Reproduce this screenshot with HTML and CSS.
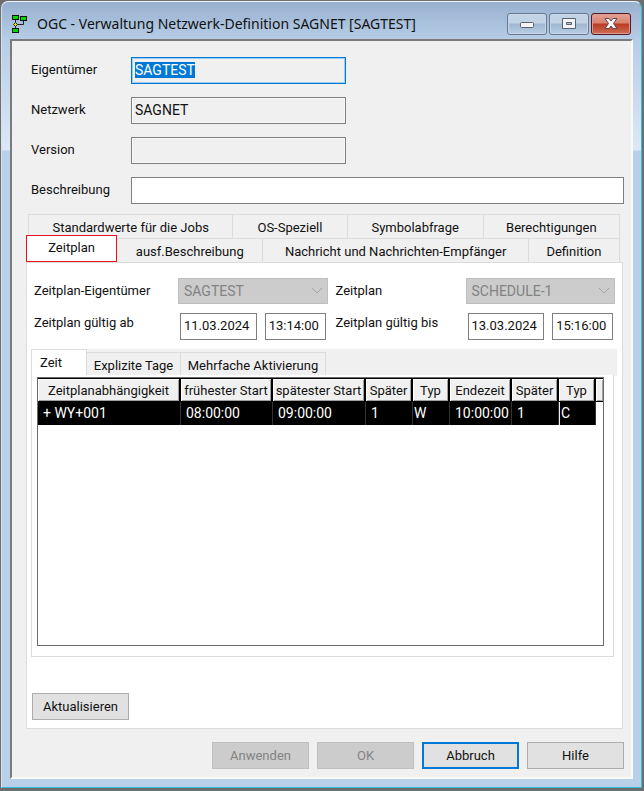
FILE: index.html
```html
<!DOCTYPE html>
<html lang="de">
<head>
    <meta charset="UTF-8">
    <meta name="viewport" content="width=device-width, initial-scale=1.0">
    <title>OGC - Verwaltung Netzwerk-Definition</title>
    <link rel="stylesheet" href="styles.css">
</head>
<body>
    <div class="window">
        <header class="titlebar">
            <svg class="app-icon" width="16" height="20" viewBox="0 0 16 20">
                <path d="M3.500 4v12M4 10.500h7.500V5" fill="none" stroke="#222"/>
                <rect x="0.500" y="1.500" width="6" height="4" fill="#00d800" stroke="#111"/>
                <rect x="8.500" y="2.500" width="6" height="4" fill="#00d800" stroke="#111"/>
                <rect x="0.500" y="14.500" width="6" height="4" fill="#00d800" stroke="#111"/>
                <path d="M3.500 8.500l2 2-2 2-2-2z" fill="#f0e000" stroke="#222"/>
            </svg>
            <h1>OGC - Verwaltung Netzwerk-Definition SAGNET [SAGTEST]</h1>
            <div class="caption-buttons">
                <button type="button" aria-label="Minimieren">
                    <svg width="14" height="12" viewBox="0 0 14 12"><rect x="0.500" y="4.500" width="13" height="5" rx="1" fill="#f4f4f4" stroke="#58616f"/></svg>
                </button>
                <button type="button" aria-label="Maximieren">
                    <svg width="14" height="12" viewBox="0 0 14 12"><path fill-rule="evenodd" d="M0.500 0.500h13v10H0.500zM4.500 4.500v2h5v-2z" fill="#f4f4f4" stroke="#58616f"/></svg>
                </button>
                <button type="button" class="close" aria-label="Schließen">
                    <svg width="14" height="12" viewBox="0 0 14 12"><path d="M1 0.500h4l2 2.500 2-2.500h4L9.500 5.500l3.500 5H9L7 8l-2 2.500H1l3.500-5z" fill="#f4f4f4" stroke="#5d4a52"/></svg>
                </button>
            </div>
        </header>

        <form class="client">
            <div class="fields">
                <label for="owner">Eigentümer</label>
                <input id="owner" class="short focused" type="text" value="SAGTEST" readonly>
                <label for="network">Netzwerk</label>
                <input id="network" class="short" type="text" value="SAGNET" readonly>
                <label for="version">Version</label>
                <input id="version" class="short" type="text" readonly>
                <label for="description">Beschreibung</label>
                <input id="description" type="text">
            </div>

            <div class="tabs" role="tablist">
                <div class="tab-row back">
                    <button type="button" role="tab">Standardwerte für die Jobs</button>
                    <button type="button" role="tab">OS-Speziell</button>
                    <button type="button" role="tab">Symbolabfrage</button>
                    <button type="button" role="tab">Berechtigungen</button>
                </div>
                <div class="tab-row front">
                    <button type="button" role="tab" class="active" aria-selected="true">Zeitplan</button>
                    <button type="button" role="tab">ausf.Beschreibung</button>
                    <button type="button" role="tab">Nachricht und Nachrichten-Empfänger</button>
                    <button type="button" role="tab">Definition</button>
                </div>
            </div>

            <div class="panel">
                <div class="schedule">
                    <label for="sched-owner">Zeitplan-Eigentümer</label>
                    <div class="combo">
                        <select id="sched-owner" disabled><option>SAGTEST</option></select>
                        <svg width="12" height="8" viewBox="0 0 12 8"><path d="M1 1l5 5 5-5" fill="none" stroke="#a3a3a3"/></svg>
                    </div>
                    <label for="sched" class="second">Zeitplan</label>
                    <div class="combo">
                        <select id="sched" disabled><option>SCHEDULE-1</option></select>
                        <svg width="12" height="8" viewBox="0 0 12 8"><path d="M1 1l5 5 5-5" fill="none" stroke="#a3a3a3"/></svg>
                    </div>
                    <label for="from-date" class="date-label">Zeitplan gültig ab</label>
                    <div class="date-time">
                        <input id="from-date" class="date" type="text" value="11.03.2024">
                        <input class="time" type="text" value="13:14:00" aria-label="Uhrzeit ab">
                    </div>
                    <label for="to-date" class="date-label second">Zeitplan gültig bis</label>
                    <div class="date-time">
                        <input id="to-date" class="date" type="text" value="13.03.2024">
                        <input class="time" type="text" value="15:16:00" aria-label="Uhrzeit bis">
                    </div>
                </div>

                <div class="inner">
                    <div class="inner-tabs" role="tablist">
                        <button type="button" role="tab" class="active" aria-selected="true">Zeit</button>
                        <button type="button" role="tab">Explizite Tage</button>
                        <button type="button" role="tab">Mehrfache Aktivierung</button>
                    </div>
                    <div class="inner-panel">
                        <div class="grid-box">
                            <table>
                                <colgroup>
                                    <col class="c-dep"><col class="c-early"><col class="c-late"><col class="c-day"><col class="c-type"><col class="c-end"><col class="c-day"><col class="c-type"><col>
                                </colgroup>
                                <thead>
                                    <tr>
                                        <th>Zeitplanabhängigkeit</th>
                                        <th>frühester Start</th>
                                        <th>spätester Start</th>
                                        <th>Später</th>
                                        <th>Typ</th>
                                        <th>Endezeit</th>
                                        <th>Später</th>
                                        <th>Typ</th>
                                        <th></th>
                                    </tr>
                                </thead>
                                <tbody>
                                    <tr>
                                        <td>+ WY+001</td>
                                        <td>08:00:00</td>
                                        <td>09:00:00</td>
                                        <td>1</td>
                                        <td class="tight">W</td>
                                        <td>10:00:00</td>
                                        <td>1</td>
                                        <td class="tight cursor">C</td>
                                        <td class="rest"></td>
                                    </tr>
                                </tbody>
                            </table>
                        </div>
                    </div>
                </div>

                <button type="button" class="btn">Aktualisieren</button>
            </div>

            <div class="actions">
                <button type="button" class="btn" disabled>Anwenden</button>
                <button type="button" class="btn" disabled>OK</button>
                <button type="button" class="btn default">Abbruch</button>
                <button type="button" class="btn">Hilfe</button>
            </div>
        </form>
    </div>

    <script>
        // first field starts focused with its text selected
        const owner = document.getElementById('owner');
        owner.focus();
        owner.select();
    </script>
</body>
</html>
```
FILE: styles.css
```css
* {
    box-sizing: border-box;
}
body {
    margin: 0;
    background-color: #6e6e6e;
    font-family: Roboto, "Liberation Sans", sans-serif;
    font-size: 13px;
    line-height: 16px;
    color: #111;
}
button, input, select {
    font: inherit;
    color: inherit;
    margin: 0;
}
input, select, td {
    font-size: 14px;
}
.window {
    display: flex;
    flex-direction: column;
    min-height: calc(100vh - 4px);
    margin: 1px 2px 3px 1px;
    padding: 0 8px 8px;
    border: 1px solid #35bcd2;
    border-top-color: #eef4fa;
    border-left-color: #d5e2f0;
    border-radius: 7px 7px 0 0;
    background: linear-gradient(#98b1cf, #b7cde7 38px, #dce8f6 148px, #b9d0ea 149px);
}
.titlebar {
    display: flex;
    align-items: center;
    height: 37px;
    padding: 7px 2px 0;
}
.app-icon {
    flex: none;
}
.titlebar h1 {
    flex: 1;
    margin: 0 0 0 9px;
    font: 14px/20px "Noto Sans", sans-serif;
    white-space: nowrap;
}
.caption-buttons {
    display: flex;
    gap: 2px;
}
.caption-buttons button {
    display: flex;
    align-items: center;
    justify-content: center;
    width: 40px;
    height: 22px;
    padding: 0;
    border: 1px solid #65788f;
    border-radius: 3px;
    background: linear-gradient(#c3d3e6 45%, #9db5d0 50%, #b9cfe7);
    box-shadow: inset 0 0 0 1px #c8d8ea;
}
.caption-buttons .close {
    border-color: #521a22;
    background: linear-gradient(#e4a395, #d98271 45%, #bb3b22 50%, #cf6e56);
    box-shadow: inset 0 0 0 1px #dd9b8e;
}
.client {
    flex: 1;
    display: flex;
    flex-direction: column;
    padding: 16px 7px 8px 14px;
    border: 2px solid #7b7b7b;
    border-right-color: #fafafa;
    border-bottom-color: #fafafa;
    background-color: #f0f0f0;
}
.fields {
    display: grid;
    grid-template-columns: 100px 1fr;
    row-gap: 13px;
    padding-left: 5px;
}
.fields label {
    padding-top: 5px;
}
input {
    height: 27px;
    padding: 0 3px 2px;
    border: 1px solid #7f7f7f;
    border-radius: 0;
    background-color: #fff;
    outline: none;
}
input[readonly] {
    background-color: #f0f0f0;
    box-shadow: inset 0 0 0 1px #fafafa;
}
.short {
    width: 215px;
}
input.focused {
    border-color: #0078d7;
    box-shadow: inset 0 0 0 1px #9ccbf0;
}
::selection {
    background-color: #0078d7;
    color: #fff;
}
.tabs {
    margin-top: 10px;
    padding-right: 4px;
}
.tab-row {
    display: grid;
}
.back {
    grid-template-columns: 205fr 114fr 136fr 136fr;
    margin-left: 2px;
}
.front {
    grid-template-columns: 91fr 146fr 265fr 91fr;
}
.tab-row button, .inner-tabs button {
    height: 24px;
    padding: 3px 0 0;
    border: 1px solid #dcdcdc;
    border-width: 1px 1px 0 0;
    background-color: #f0f0f0;
    white-space: nowrap;
}
.back button:first-child {
    border-left-width: 1px;
}
.tab-row .active {
    height: 27px;
    margin: -3px 0 0;
    padding: 0 0 1px;
    border: 1px solid #e81123;
    background-color: #fff;
}
.panel {
    flex: 1;
    display: flex;
    flex-direction: column;
    margin-right: 1px;
    padding: 15px 5px 8px 4px;
    border: 1px solid #dcdcdc;
    background-color: #fff;
}
.schedule {
    display: grid;
    grid-template-columns: 144px minmax(0, 1fr) 138px minmax(0, 1fr);
    row-gap: 9px;
    padding: 0 2px 0 3px;
}
.schedule label {
    padding-top: 5px;
}
.schedule .date-label {
    padding-top: 2px;
}
.schedule .second {
    padding-left: 8px;
}
.combo {
    display: grid;
    align-items: center;
}
.combo select, .combo svg {
    grid-area: 1 / 1;
}
.combo svg {
    justify-self: end;
    margin-right: 5px;
}
.combo select {
    width: 100%;
    height: 26px;
    padding: 0 5px;
    border: 1px solid #bfbfbf;
    border-radius: 0;
    background-color: #ccc;
    color: #838383;
    opacity: 1;
    appearance: none;
}
.date-time {
    display: flex;
    gap: 8px;
    padding: 0 2px;
}
.date-time input {
    min-width: 0;
    font-size: 13px;
}
.date {
    flex: 78;
}
.time {
    flex: 60;
}
.inner {
    flex: 1;
    display: flex;
    flex-direction: column;
    margin: 9px 0 36px;
    padding-right: 3px;
    background: linear-gradient(#f0f0f0, #f0f0f0) no-repeat 0 0 / 100% 27px;
}
.inner-tabs {
    display: flex;
    align-items: flex-end;
}
.inner-tabs button {
    height: 23px;
    padding: 3px 3px 0;
}
.inner-tabs button:nth-child(2) {
    width: 94px;
}
.inner-tabs button:nth-child(3) {
    width: 145px;
}
.inner-tabs .active {
    width: 56px;
    height: 26px;
    padding: 0 24px 0 8px;
    border-left-width: 1px;
    background-color: #fff;
}
.inner-panel {
    flex: 1;
    display: flex;
    padding: 2px 9px 10px 5px;
    border: 1px solid #dcdcdc;
    border-top: 0;
    background-color: #fff;
}
.grid-box {
    flex: 1;
    border: 1px solid #6b6b6b;
}
table {
    width: 100%;
    table-layout: fixed;
    border-collapse: separate;
    border-spacing: 0;
}
.c-dep {
    width: 143px;
}
.c-early {
    width: 92px;
}
.c-late {
    width: 93px;
}
.c-day {
    width: 47px;
}
.c-type {
    width: 37px;
}
.c-end {
    width: 62px;
}
th {
    height: 24px;
    padding: 2px 0 0;
    border: solid #000;
    border-width: 1px 2px 1px 0;
    background-color: #f0f0f0;
    box-shadow: inset 1px 1px #fff, inset -1px -1px #a0a0a0;
    font-weight: normal;
    white-space: nowrap;
}
th:last-child {
    border-right-width: 0;
}
td {
    height: 23px;
    padding: 0 5px 1px;
    border-right: 1px solid #333;
    background-color: #000;
    color: #fff;
}
.tight {
    padding: 0 1px 1px;
}
.cursor {
    border-left: 1px solid #eee;
}
td.rest {
    padding: 0;
    border: 0;
    background-color: #fff;
}
.btn {
    width: 97px;
    height: 27px;
    padding: 0;
    border: 1px solid #adadad;
    background-color: #e1e1e1;
}
.panel > .btn {
    margin-left: 1px;
}
.btn:disabled {
    border-color: #bfbfbf;
    background-color: #ccc;
    color: #838383;
}
.btn.default {
    border: 2px solid #0078d7;
}
.actions {
    display: flex;
    justify-content: flex-end;
    gap: 8px;
    margin-top: 13px;
}
```
